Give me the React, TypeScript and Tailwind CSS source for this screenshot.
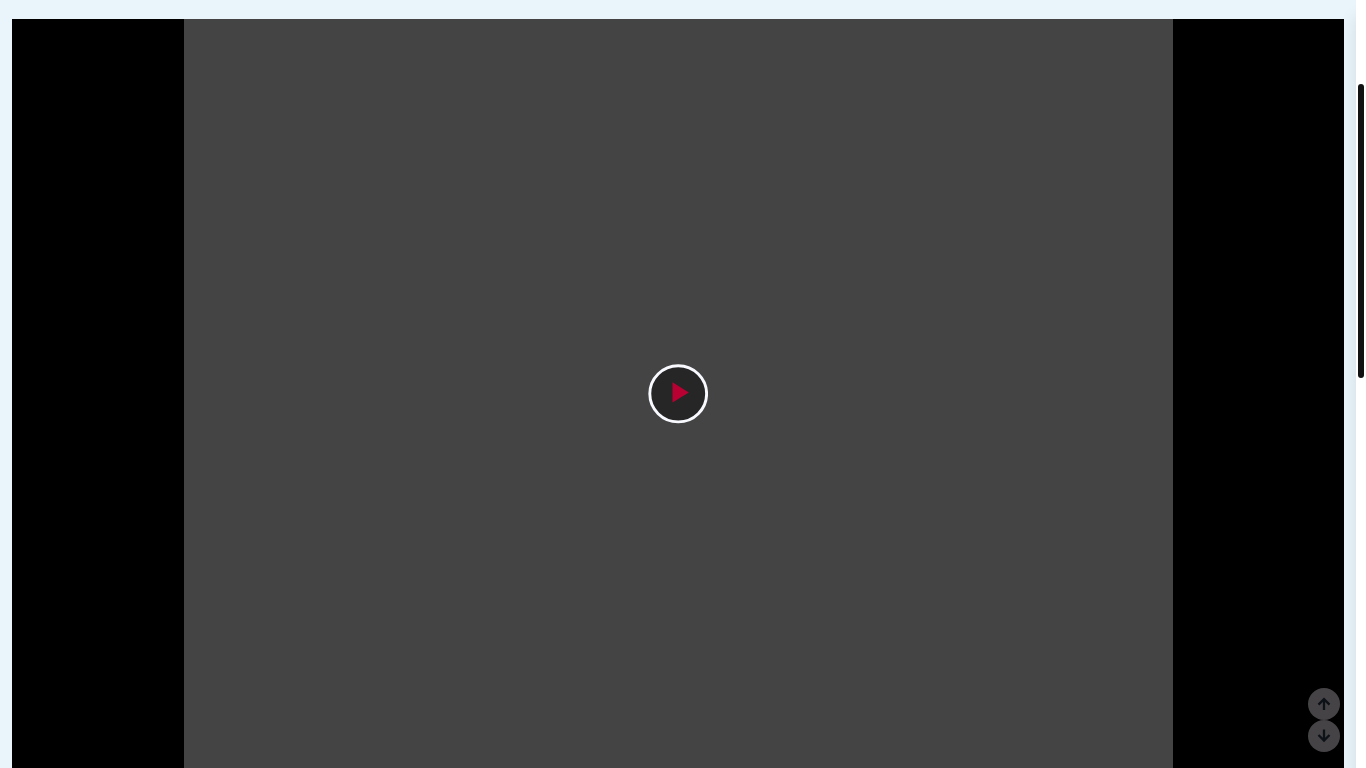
import React, { useState } from 'react';

const ScrollButton: React.FC<{ label: string; path: string }> = ({ label, path }) => (
  <button
    type="button"
    aria-label={label}
    className="flex h-8 w-8 items-center justify-center rounded-full bg-[#464346] text-[#0d1118]"
  >
    <svg
      width="16"
      height="16"
      viewBox="0 0 16 16"
      fill="none"
      stroke="currentColor"
      strokeWidth="2.3"
      strokeLinejoin="miter"
    >
      <path d={path} />
    </svg>
  </button>
);

const VideoPlayer: React.FC = () => {
  const [playing, setPlaying] = useState(false);

  return (
    <div className="flex flex-1 justify-center bg-black">
      <div className="flex w-[74.25%] items-center justify-center bg-[#444444]">
        <button
          type="button"
          aria-label={playing ? 'Pause video' : 'Play video'}
          className="flex h-[60px] w-[60px] items-center justify-center rounded-full"
          onClick={() => setPlaying(!playing)}
        >
          <svg width="60" height="60" viewBox="0 0 60 60">
            <ellipse cx="30.2" cy="29.8" rx="28.4" ry="28.1" fill="#262626" stroke="#f9faff" strokeWidth="2.9" />
            {playing ? (
              <path d="M23 20h5v20h-5zM32 20h5v20h-5z" fill="#b80032" />
            ) : (
              <path d="M24.5 18.3L40.8 28.4L24.5 38.6z" fill="#b80032" />
            )}
          </svg>
        </button>
      </div>
    </div>
  );
};

const App: React.FC = () => {
  return (
    <div className="flex h-screen overflow-hidden bg-white">
      <main className="flex flex-1 flex-col bg-[#e9f5fb] px-3 pt-[19px]">
        <VideoPlayer />
      </main>

      {/* Scroll track */}
      <div className="relative w-[10px] bg-white px-[2px] pt-[84px] shadow-[0_16px_16px_rgba(0,0,0,0.12)]">
        <div className="h-[294px] rounded-full bg-[#111111]" />
      </div>

      <nav aria-label="Page scroll" className="fixed right-[26px] bottom-4 flex flex-col">
        <ScrollButton label="Scroll up" path="M8 14V3.2M2.5 8.6L8 3.1L13.5 8.6" />
        <ScrollButton label="Scroll down" path="M8 1.6V12.5M2.5 7L8 12.5L13.5 7" />
      </nav>
    </div>
  );
};

export default App;
